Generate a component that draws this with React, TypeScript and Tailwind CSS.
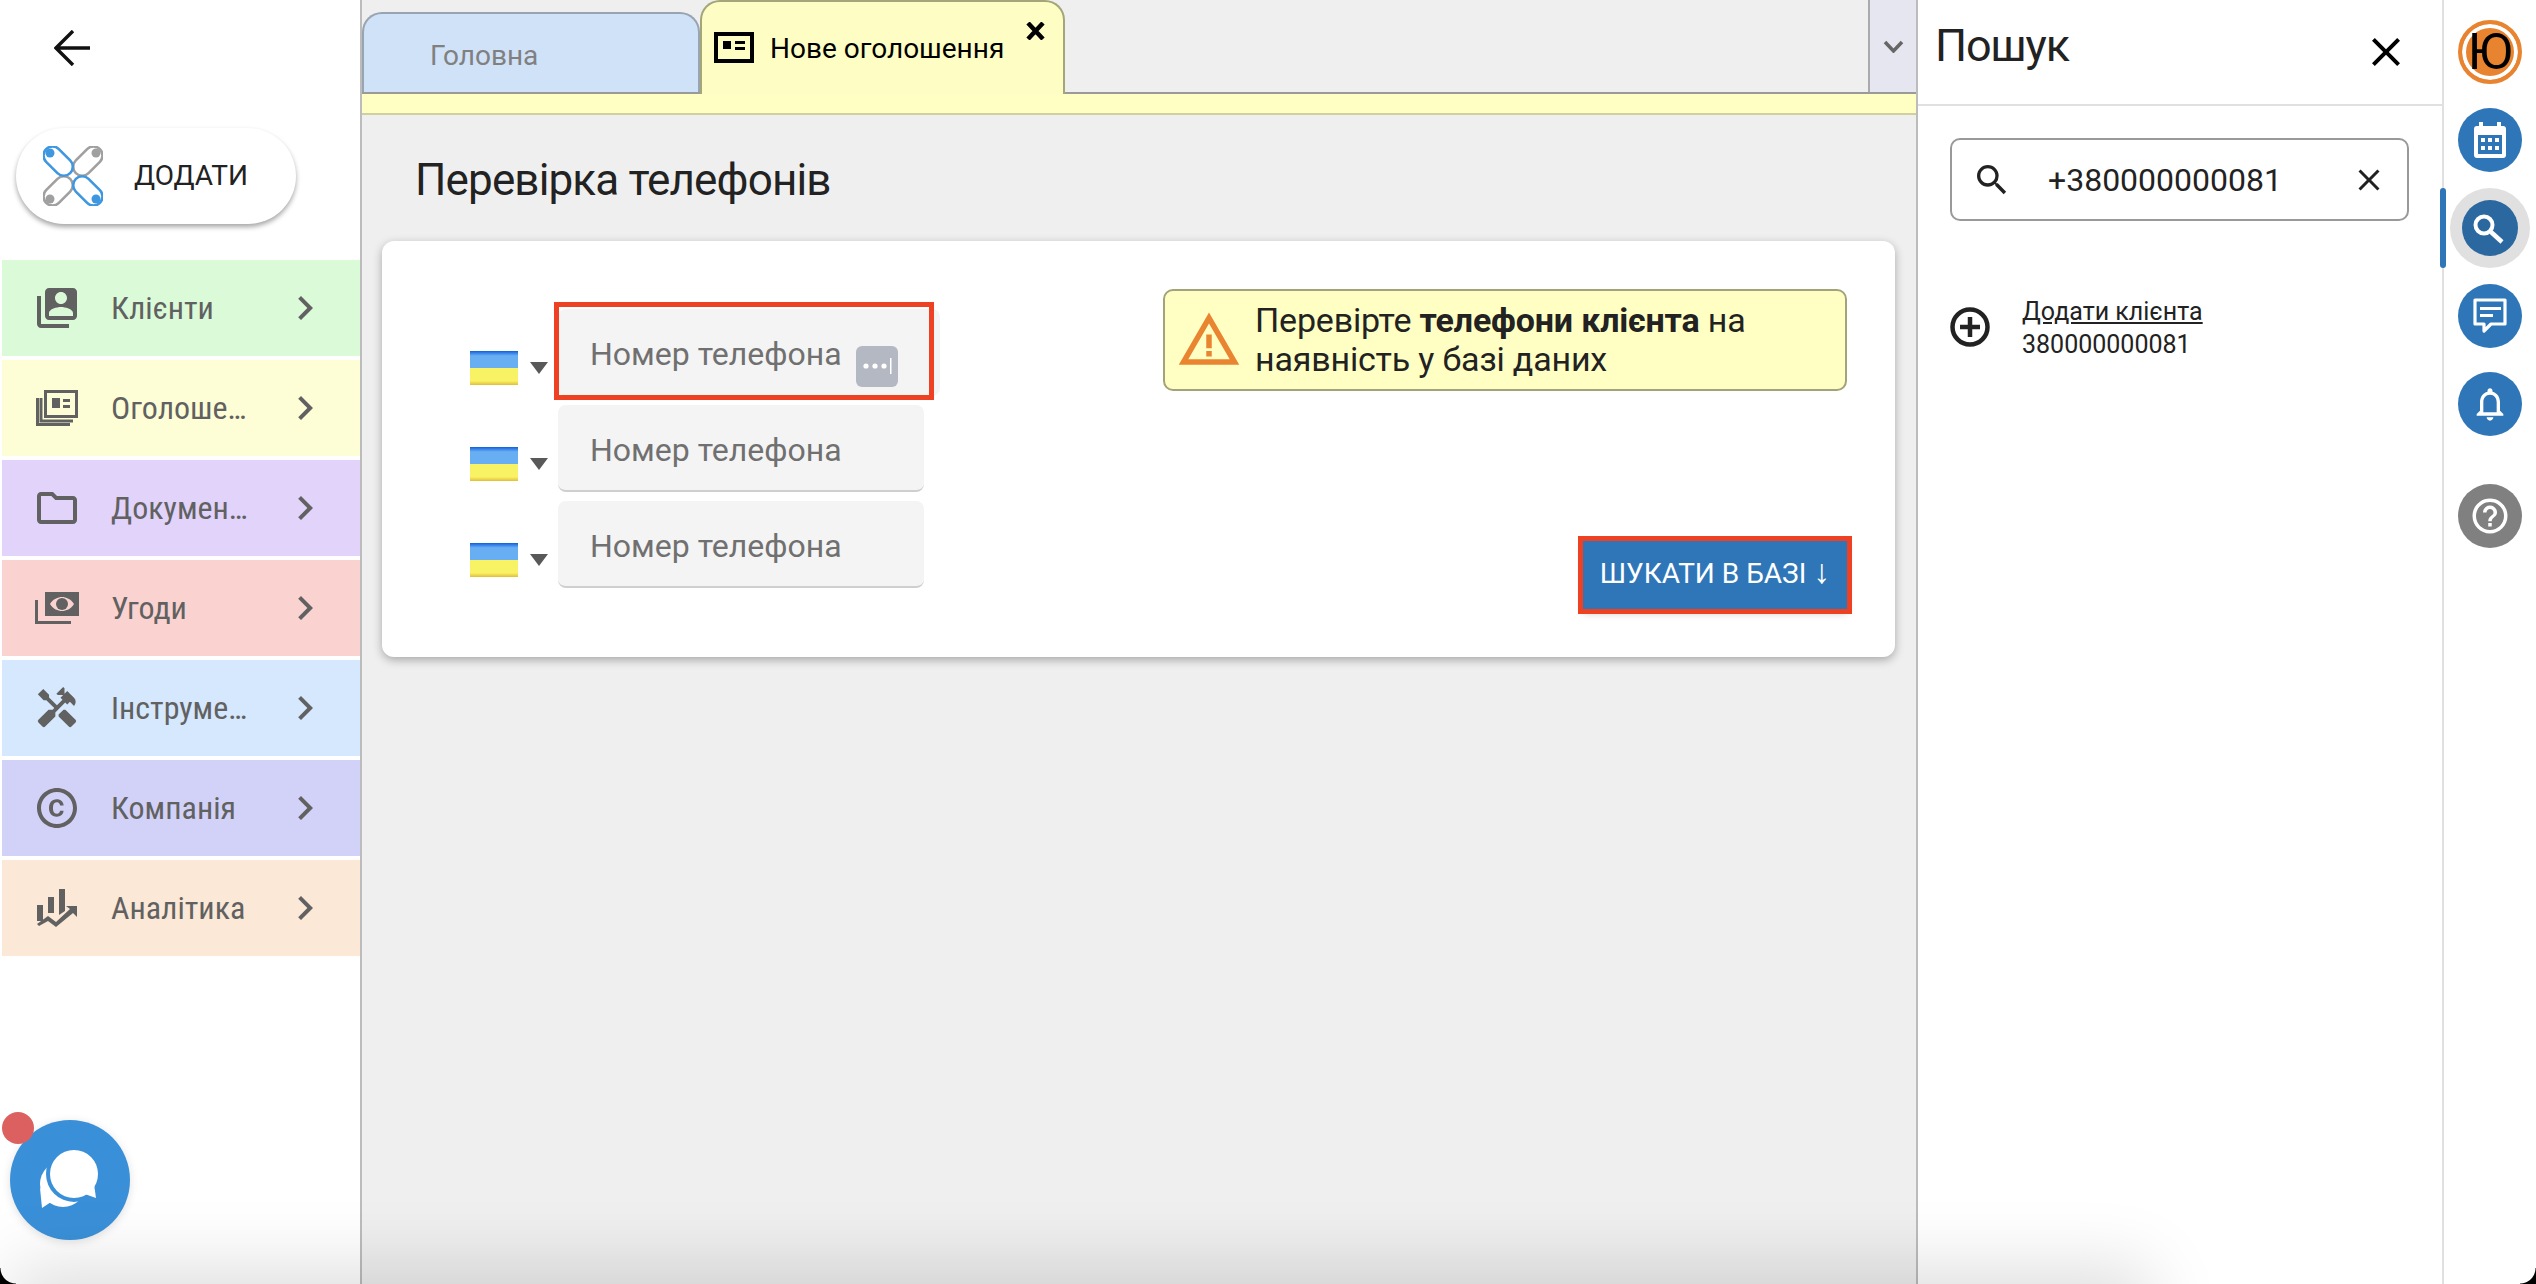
import { MdSwitchAccount, MdOutlineFolder, MdHandyman, MdOutlineCopyright, MdChevronRight, MdClose, MdSearch, MdOutlineNotifications, MdHelpOutline, MdWarningAmber } from "react-icons/md";

const NewsStack = () => (
  <svg width="42" height="36" viewBox="0 0 42 36" fill="none" stroke="currentColor" strokeWidth="3">
    <rect x="9.5" y="1.5" width="31" height="25" />
    <path d="M5 8v23h32M1.5 8v26.5H34" />
    <path d="M16 8h8v10h-8zM27 9h7v3h-7zM27 15h7v3h-7z" fill="currentColor" stroke="none" />
  </svg>
);

const MoneyStack = () => (
  <svg width="44" height="32" viewBox="0 0 44 32">
    <path fill="currentColor" fillRule="evenodd" d="M10 0h34v24H10zM15 12c3-5 8-7 12-7s9 2 12 7c-3 5-8 7-12 7s-9-2-12-7z" />
    <circle cx="27" cy="12" r="6" fill="currentColor" />
    <path fill="currentColor" d="M0 8h3v21h33v3H0z" />
  </svg>
);

const ChartArrow = () => (
  <svg width="40" height="38" viewBox="0 0 40 38" fill="currentColor">
    <path d="M0 16h6v16H0zM11 8h6v16h-6zM22 0h6v22l-6 4z" />
    <path d="M0 35l11-8 8 6L33 20l-4-3h11v11l-4-4-17 14-8-6-9 5z" />
  </svg>
);

const menu = [
  { label: "Клієнти", bg: "bg-[#dbfbd8]", icon: <MdSwitchAccount size={48} /> },
  { label: "Оголоше…", bg: "bg-[#fefed6]", icon: <NewsStack /> },
  { label: "Докумен…", bg: "bg-[#e2d3fb]", icon: <MdOutlineFolder size={48} /> },
  { label: "Угоди", bg: "bg-[#fad3d0]", icon: <MoneyStack /> },
  { label: "Інструме…", bg: "bg-[#d5e8fe]", icon: <MdHandyman size={46} /> },
  { label: "Компанія", bg: "bg-[#d2d2f8]", icon: <MdOutlineCopyright size={48} /> },
  { label: "Аналітика", bg: "bg-[#fbe8d6]", icon: <ChartArrow /> },
];

const Logo = () => (
  <svg width="60" height="60" viewBox="0 0 60 60" fill="none" strokeWidth="2.6" className="blur-[0.6px]">
    <g transform="translate(30 30)">
      <rect x="-9" y="-38" width="18" height="34" rx="9" stroke="#a0a0a0" transform="rotate(45)" />
      <rect x="-9" y="-38" width="18" height="34" rx="9" stroke="#a0a0a0" transform="rotate(-135)" />
      <rect x="-9" y="-38" width="18" height="34" rx="9" stroke="#3f97e0" transform="rotate(-45)" />
      <rect x="-9" y="-38" width="18" height="34" rx="9" stroke="#3f97e0" transform="rotate(135)" />
    </g>
    <circle cx="7" cy="7" r="4.5" fill="#3f97e0" />
    <circle cx="53" cy="7" r="4.5" fill="#a0a0a0" />
    <circle cx="7" cy="53" r="4.5" fill="#a0a0a0" />
    <circle cx="53" cy="53" r="4.5" fill="#3f97e0" />
  </svg>
);

const Flag = () => (
  <div className="h-[34px] w-[48px] bg-[linear-gradient(#0f5fe0_0%,#68aef2_14%,#68aef2_50%,#f8f265_50%,#f8f265_88%,#e3bd3c_100%)]" />
);

const PhoneRow = ({ first }: { first?: boolean }) => (
  <div className="flex items-end">
    <div className="mb-[11px]">
      <Flag />
    </div>
    <div className="mb-[22px] ml-[12px] mr-[10px] h-0 w-0 border-x-[9px] border-t-[12px] border-x-transparent border-t-[#595959]" />
    <div
      className={`relative flex h-[87px] items-center rounded-[8px] bg-[#f4f4f4] pl-[32px] text-[32px] text-[#707070] ${
        first ? "w-[382px] pt-[3px]" : "w-[366px] border-b-2 border-[#cfcfcf] pt-[5px]"
      }`}
    >
      Номер телефона
      {first ? (
        <>
          <div className="ml-[14px] mt-[24px] flex h-[41px] w-[42px] items-center justify-center rounded-[6px] bg-[#b4b8c2]">
            <svg width="32" height="16" viewBox="0 0 32 16" fill="white">
              <circle cx="5" cy="8" r="2.6" />
              <circle cx="14" cy="8" r="2.6" />
              <circle cx="23" cy="8" r="2.6" />
              <rect x="29" y="0" width="1.5" height="16" />
            </svg>
          </div>
          <div className="absolute bottom-[-4px] left-[-4px] right-[6px] top-[-7px] border-[5px] border-[#ee4023]" />
        </>
      ) : null}
    </div>
  </div>
);

const RailButton = ({ className, children }: { className: string; children: React.ReactNode }) => (
  <div className={`flex h-[64px] w-[64px] items-center justify-center rounded-full text-white ${className}`}>{children}</div>
);

const App = () => {
  return (
    <div className="relative flex h-[1284px] w-[2536px] overflow-hidden bg-white font-['Roboto',sans-serif] text-[#222]">
      {/* left menu */}
      <aside className="flex w-[360px] shrink-0 flex-col">
        <div className="pl-[54px] pt-[30px]">
          <svg width="36" height="36" viewBox="0 0 36 36" fill="none" stroke="#111" strokeWidth="3.4">
            <path d="M36 18H2M19 1L2 18l17 17" />
          </svg>
        </div>
        <div className="ml-[16px] mt-[62px] flex h-[96px] w-[280px] items-center rounded-full bg-white pl-[27px] shadow-[0_3px_5px_rgba(0,0,0,0.35)]">
          <Logo />
          <span className="ml-[31px] text-[28px]">ДОДАТИ</span>
        </div>
        <nav className="mt-[36px] flex flex-col gap-[4px] pl-[2px]">
          {menu.map((item) => (
            <div key={item.label} className={`flex h-[96px] items-center pl-[31px] pr-[31px] text-[#616161] ${item.bg}`}>
              <div className="flex w-[48px] justify-center">{item.icon}</div>
              <span className="ml-[30px] whitespace-nowrap text-[32px] [font-stretch:condensed]">{item.label}</span>
              <MdChevronRight size={48} className="ml-auto shrink-0" />
            </div>
          ))}
        </nav>
      </aside>

      {/* main column */}
      <main className="flex w-[1558px] shrink-0 flex-col border-x-2 border-[#bcbcbc] bg-[#efefef]">
        <div className="flex h-[94px] shrink-0 items-end border-b-2 border-[#9a9a9a]">
          <div className="flex h-[80px] w-[338px] items-center rounded-t-[20px] border-x-2 border-t-2 border-[#98a4b0] bg-[#d0e2f8] pl-[66px] pt-[6px] text-[28px] text-[#808080]">
            Головна
          </div>
          <div className="relative -mb-[2px] flex h-[94px] w-[365px] items-start rounded-t-[20px] border-x-2 border-t-2 border-[#a5a57a] bg-[#fefec4] pl-[12px] pt-[30px] text-[28px] text-black">
            <svg width="40" height="31" viewBox="0 0 40 31" fill="none" stroke="black" strokeWidth="4">
              <rect x="2" y="2" width="36" height="27" />
              <path d="M9 9h8v8H9zM21 9h10v3H21zM21 15h10v3H21z" fill="black" stroke="none" />
            </svg>
            <span className="ml-[16px] leading-[34px]">Нове оголошення</span>
            <svg width="19" height="18" viewBox="0 0 19 18" stroke="black" strokeWidth="4.5" className="absolute right-[18px] top-[20px]">
              <path d="M2 1l15 16M17 1L2 17" />
            </svg>
          </div>
          <div className="ml-auto flex h-[92px] w-[48px] items-center justify-center border-l-2 border-[#aaa] bg-[#e6e6f0]">
            <svg width="21" height="13" viewBox="0 0 21 13" fill="none" stroke="#666" strokeWidth="3.5">
              <path d="M2 2l8.5 9L19 2" />
            </svg>
          </div>
        </div>
        <div className="h-[21px] shrink-0 border-b-2 border-[#cfcfa0] bg-[#ffffc4]" />

        <h1 className="ml-[53px] flex h-[126px] shrink-0 items-center pt-[3px] text-[44px] font-normal tracking-[-0.85px] text-[#222]">Перевірка телефонів</h1>

        <section className="ml-[20px] mr-[21px] flex h-[416px] justify-between rounded-[12px] bg-white py-[48px] pl-[88px] pr-[48px] shadow-[0_3px_10px_rgba(0,0,0,0.3)]">
          <div className="flex flex-col gap-[9px] pt-[20px]">
            <PhoneRow first />
            <PhoneRow />
            <PhoneRow />
          </div>
          <div className="flex w-[684px] flex-col items-end justify-between">
            <div className="flex h-[102px] w-[684px] items-center rounded-[10px] border-2 border-[#a3a37a] bg-[#ffffc4] pl-[11px] text-[34px] leading-[39px] tracking-[-0.18px]">
              <MdWarningAmber size={66} className="shrink-0 text-[#e98530]" />
              <p className="ml-[13px]">
                Перевірте <b>телефони клієнта</b> на
                <br />
                наявність у базі даних
              </p>
            </div>
            <button className="h-[68px] w-[264px] bg-[#2e76b8] pb-[3px] text-[28px] text-white shadow-[0_4px_8px_rgba(0,0,0,0.2)] outline-[5px] outline-[#ee4023]">
              ШУКАТИ В БАЗІ <span className="text-[34px] leading-none">↓</span>
            </button>
          </div>
        </section>
      </main>

      {/* search panel */}
      <div className="flex w-[526px] shrink-0 flex-col border-r-2 border-[#e0e0e0]">
        <div className="flex h-[106px] shrink-0 items-center border-b-2 border-[#e0e0e0] pb-[12px] pl-[17px] pr-[32px]">
          <span className="text-[45px] tracking-[-1.2px]">Пошук</span>
          <MdClose size={48} className="ml-auto mt-[12px] text-black" />
        </div>
        <div className="ml-[32px] mt-[32px] flex h-[83px] w-[459px] items-center rounded-[10px] border-2 border-[#999] pl-[20px] pr-[20px]">
          <MdSearch size={40} className="text-[#222]" />
          <span className="ml-[36px] text-[32px]">+380000000081</span>
          <MdClose size={36} className="ml-auto text-[#222]" />
        </div>
        <div className="ml-[32px] mt-[72px] flex items-center">
          <svg width="40" height="40" viewBox="0 0 40 40" fill="none" stroke="#222" strokeWidth="4.5">
            <circle cx="20" cy="20" r="17.5" />
            <path d="M20 10v20M10 20h20" />
          </svg>
          <div className="ml-[32px] pt-[2px]">
            <div className="text-[25px] leading-[34px] underline">Додати клієнта</div>
            <div className="text-[25px] leading-[32px]">380000000081</div>
          </div>
        </div>
      </div>

      {/* right rail */}
      <div className="flex flex-1 flex-col items-center pt-[20px]">
        <div className="flex h-[64px] w-[64px] items-center justify-center overflow-hidden rounded-full border-[4px] border-[#e88330] bg-[#e88330] text-[50px] leading-none text-black [box-shadow:inset_0_0_0_4px_white]">
          Ю
        </div>
        <RailButton className="mt-[24px] bg-[#2e76b8]">
          <svg width="32" height="36" viewBox="0 0 32 36" fill="white">
            <path d="M5 0h4v4h14V0h4v4h2c2 0 3 1 3 3v26c0 2-1 3-3 3H3c-2 0-3-1-3-3V7c0-2 1-3 3-3h2z" />
            <rect x="4" y="13" width="24" height="19" fill="#2e76b8" />
            <path d="M7 16h4v4H7zM14 16h4v4h-4zM21 16h4v4h-4zM7 24h4v4H7zM14 24h4v4h-4zM21 24h4v4h-4z" />
          </svg>
        </RailButton>
        <div className="relative mt-[16px] flex h-[80px] w-[80px] items-center justify-center rounded-full bg-[#e0e0e0]">
          <div className="absolute bottom-0 left-[-10px] top-0 w-[6px] rounded-full bg-[#2e76b8]" />
          <div className="flex h-[56px] w-[56px] items-center justify-center rounded-full bg-[#2a689f]">
            <svg width="56" height="56" viewBox="0 0 56 56" fill="none" stroke="white">
              <circle cx="22" cy="25" r="8.5" strokeWidth="4" />
              <path d="M29 32l11 10" strokeWidth="4.5" />
            </svg>
          </div>
        </div>
        <RailButton className="mt-[16px] bg-[#2e76b8]">
          <svg width="34" height="36" viewBox="0 0 34 36" fill="none" stroke="white" strokeWidth="3.2" strokeLinejoin="round">
            <path d="M2 2h30v24H18l-7 7v-7H2z" />
            <path d="M7 9h21v3H7zM7 16h13v3H7z" fill="white" stroke="none" />
          </svg>
        </RailButton>
        <RailButton className="mt-[24px] bg-[#2e76b8]">
          <MdOutlineNotifications size={40} />
        </RailButton>
        <RailButton className="mt-[48px] bg-[#808080]">
          <MdHelpOutline size={42} />
        </RailButton>
      </div>

      {/* chat widget */}
      <div className="absolute left-[10px] top-[1120px] h-[120px] w-[120px] rounded-full bg-[#3a90d8] shadow-[0_2px_10px_rgba(0,0,0,0.12)]">
        <svg width="120" height="120" viewBox="0 0 120 120">
          <circle cx="53" cy="64" r="23" fill="white" />
          <path d="M30 68l2 20 12-8z" fill="white" />
          <circle cx="64" cy="54" r="28" fill="#3a90d8" />
          <circle cx="64" cy="54" r="24" fill="white" />
          <path d="M84 64l2 14-14-5z" fill="white" />
        </svg>
      </div>
      <div className="absolute left-[2px] top-[1112px] h-[32px] w-[32px] rounded-full bg-[#dc6060]" />

      {/* window shadow along the bottom edge */}
      <div className="pointer-events-none absolute left-[40px] top-[1296px] h-[40px] w-[2080px] shadow-[0_0_70px_30px_rgba(0,0,0,0.13)]" />
      <div className="absolute bottom-0 left-0 h-[16px] w-[16px] bg-[radial-gradient(circle_at_100%_0,transparent_15px,black_16px)]" />
      <div className="absolute bottom-0 right-0 h-[16px] w-[16px] bg-[radial-gradient(circle_at_0_0,transparent_15px,black_16px)]" />
    </div>
  );
};

export default App;
